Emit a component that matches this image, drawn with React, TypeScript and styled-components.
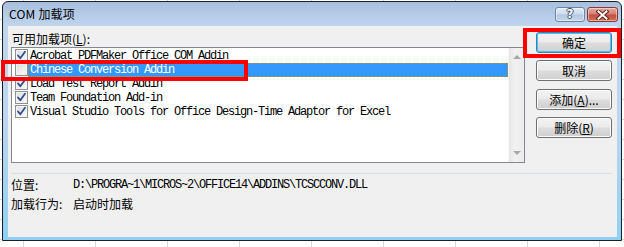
import React from "react";
import styled, { createGlobalStyle } from "styled-components";

const GlobalStyle = createGlobalStyle`
  html, body { margin: 0; padding: 0; }
  body {
    width: 624px;
    height: 247px;
    overflow: hidden;
    background-color: #ffffff;
    background-image:
      repeating-linear-gradient(to right, transparent 0 23px, #d9d9d9 23px 24px, transparent 24px 72px),
      repeating-linear-gradient(to bottom, transparent 0 19px, #d9d9d9 19px 20px);
    font-family: "Noto Sans CJK SC", "Noto Sans", sans-serif;
  }
`;

const Page = styled.div`
  position: relative;
  width: 624px;
  height: 247px;
  padding: 1px 0 0 2px;
  box-sizing: border-box;
`;

const Window = styled.div`
  width: 620px;
  height: 240px;
  box-sizing: border-box;
  border: 1px solid #1c1f24;
  border-radius: 6px 6px 0 0;
  background: linear-gradient(to bottom, #a7bfdd 0px, #b6cce8 14px, #c0d5ee 24px, #bcd6ef 120px, #8fd0f3 238px);
  display: flex;
  flex-direction: column;
  overflow: hidden;
`;

const TitleBar = styled.div`
  height: 24px;
  flex: none;
  display: flex;
  align-items: flex-start;
  padding: 0 3px 0 6px;
`;

const Title = styled.div`
  flex: 1;
  font-size: 12px;
  line-height: 24px;
  color: #000;
  letter-spacing: 0.2px;
`;

const CaptionButton = styled.div<{ $variant: "help" | "close" }>`
  width: ${(p) => (p.$variant === "help" ? "30px" : "31px")};
  height: 15px;
  margin-top: 5px;
  margin-left: ${(p) => (p.$variant === "help" ? "0" : "2px")};
  box-sizing: border-box;
  border-radius: 3px;
  border: 1px solid ${(p) => (p.$variant === "help" ? "#6f84a3" : "#8a3a33")};
  background: ${(p) =>
    p.$variant === "help"
      ? "linear-gradient(to bottom, #e4edf7 0%, #cbdaec 48%, #b3c8e2 52%, #c4d6ec 100%)"
      : "linear-gradient(to bottom, #e8a99f 0%, #d47d70 48%, #c24e3f 52%, #d0705c 100%)"};
  box-shadow: inset 0 0 0 1px rgba(255, 255, 255, 0.45);
  display: flex;
  align-items: center;
  justify-content: center;
`;

const HelpGlyph = styled.span`
  font-family: "DejaVu Sans", sans-serif;
  font-weight: bold;
  font-size: 12px;
  line-height: 13px;
  color: #ffffff;
  text-shadow: 1px 0 0 #3c4f6c, -1px 0 0 #3c4f6c, 0 1px 0 #3c4f6c, 0 -1px 0 #3c4f6c;
`;

const Client = styled.div`
  flex: 1;
  margin: 0 4px 3px 5px;
  background: #f0f0f0;
  display: flex;
  flex-direction: column;
  padding: 0 5px 0 3px;
`;

const TopSection = styled.div`
  display: flex;
  align-items: flex-start;
`;

const LeftCol = styled.div`
  flex: 1;
  display: flex;
  flex-direction: column;
`;

const ListLabel = styled.div`
  height: 21px;
  box-sizing: border-box;
  padding: 3px 0 0 1px;
  display: flex;
  align-items: center;
  font-size: 12px;
  color: #000;
`;

const ListBox = styled.div`
  height: 116px;
  box-sizing: border-box;
  border: 1px solid #828790;
  background: #ffffff;
  display: flex;
`;

const Items = styled.div`
  flex: 1;
  padding-top: 1px;
  display: flex;
  flex-direction: column;
`;

const Row = styled.div`
  height: 14px;
  display: flex;
  align-items: flex-start;
`;

const CheckBox = styled.div`
  width: 13px;
  height: 13px;
  margin-left: 3px;
  box-sizing: border-box;
  border: 1px solid #8e8f8f;
  background: linear-gradient(135deg, #dcdcdc 0%, #f0f0f0 60%, #fdfdfd 100%);
  box-shadow: inset 0 0 0 1px #f4f4f4;
  flex: none;
  position: relative;
`;

const CheckSvg = styled.svg`
  position: absolute;
  left: 0;
  top: 0;
`;

const ItemText = styled.div<{ $selected?: boolean }>`
  flex: 1;
  height: 14px;
  box-sizing: border-box;
  padding-left: 2px;
  font-family: "Liberation Mono", monospace;
  font-size: 12px;
  letter-spacing: -1.2px;
  line-height: 14px;
  white-space: nowrap;
  color: ${(p) => (p.$selected ? "#ffffff" : "#000000")};
  background: ${(p) => (p.$selected ? "#3399ff" : "transparent")};
  outline: ${(p) => (p.$selected ? "1px dotted #d98a2c" : "none")};
  outline-offset: -1px;
`;

const ScrollBar = styled.div`
  width: 16px;
  flex: none;
  background: linear-gradient(to right, #e6e6e6, #f1f1f1 40%, #ececec);
  border-left: 1px solid #f4f4f4;
  box-sizing: border-box;
  display: flex;
  flex-direction: column;
  justify-content: space-between;
  align-items: center;
  padding: 7px 0 7px 0;
`;

const Arrow = styled.div<{ $down?: boolean }>`
  width: 0;
  height: 0;
  border-left: 4px solid transparent;
  border-right: 4px solid transparent;
  ${(p) => (p.$down ? "border-top: 4px solid #a8a8a8;" : "border-bottom: 4px solid #a8a8a8;")}
`;

const ButtonCol = styled.div`
  width: 76px;
  margin-left: 11px;
  padding-top: 6px;
  display: flex;
  flex-direction: column;
`;

const Button = styled.div<{ $default?: boolean; $gap: number }>`
  height: 21px;
  margin-top: ${(p) => p.$gap}px;
  box-sizing: border-box;
  border: 1px solid ${(p) => (p.$default ? "#3c7fb1" : "#707070")};
  border-radius: 3px;
  background: linear-gradient(to bottom, #f2f2f2 0%, #ebebeb 48%, #dddddd 52%, #cfcfcf 100%);
  box-shadow: ${(p) => (p.$default ? "inset 0 0 0 1px #48c2f5" : "inset 0 0 0 1px #fcfcfc")};
  display: flex;
  align-items: center;
  justify-content: center;
  font-size: 12px;
  color: #000;
`;

const Separator = styled.div`
  height: 1px;
  margin-top: 10px;
  background: #d5dfe5;
`;

const InfoGrid = styled.div`
  display: grid;
  grid-template-columns: 62px auto;
  grid-auto-rows: 19px;
  row-gap: 0;
  margin-top: 1px;
  align-items: center;
  font-size: 12px;
  color: #000;
`;

const Mono = styled.span`
  font-family: "Liberation Mono", monospace;
  font-size: 12px;
  letter-spacing: -1.2px;
`;

const Annotation = styled.div<{ $l: number; $t: number; $w: number; $h: number }>`
  position: absolute;
  left: ${(p) => p.$l}px;
  top: ${(p) => p.$t}px;
  width: ${(p) => p.$w}px;
  height: ${(p) => p.$h}px;
  box-sizing: border-box;
  border: 4px solid #ff0000;
  pointer-events: none;
`;

const Check = () => (
  <CheckSvg width="11" height="11" viewBox="0 0 11 11">
    <path d="M2 5.5 L4.3 8.2 L9 1.8" fill="none" stroke="#2e4e8c" strokeWidth="1.8" strokeLinecap="round" strokeLinejoin="round" />
  </CheckSvg>
);

const items = [
  { name: "Acrobat PDFMaker Office COM Addin", checked: true },
  { name: "Chinese Conversion Addin", checked: false, selected: true },
  { name: "Load Test Report Addin", checked: true },
  { name: "Team Foundation Add-in", checked: true },
  { name: "Visual Studio Tools for Office Design-Time Adaptor for Excel", checked: true },
];

export default function App() {
  return (
    <>
      <GlobalStyle />
      <Page>
        <Window>
          <TitleBar>
            <Title>COM 加载项</Title>
            <CaptionButton $variant="help">
              <HelpGlyph>?</HelpGlyph>
            </CaptionButton>
            <CaptionButton $variant="close">
              <svg width="13" height="10" viewBox="0 0 13 10">
                <path d="M2.5 1.5 L10.5 8.5 M10.5 1.5 L2.5 8.5" stroke="#5b2620" strokeWidth="4" strokeLinecap="square" />
                <path d="M2.5 1.5 L10.5 8.5 M10.5 1.5 L2.5 8.5" stroke="#ffffff" strokeWidth="2" strokeLinecap="square" />
              </svg>
            </CaptionButton>
          </TitleBar>
          <Client>
            <TopSection>
              <LeftCol>
                <ListLabel>
                  可用加载项(<u>L</u>):
                </ListLabel>
                <ListBox>
                  <Items>
                    {items.map((it) => (
                      <Row key={it.name}>
                        <CheckBox>{it.checked && <Check />}</CheckBox>
                        <ItemText $selected={it.selected}>{it.name}</ItemText>
                      </Row>
                    ))}
                  </Items>
                  <ScrollBar>
                    <Arrow />
                    <Arrow $down />
                  </ScrollBar>
                </ListBox>
              </LeftCol>
              <ButtonCol>
                <Button $default $gap={0}>确定</Button>
                <Button $gap={7}>取消</Button>
                <Button $gap={8}>添加(<u>A</u>)...</Button>
                <Button $gap={7}>删除(<u>R</u>)</Button>
              </ButtonCol>
            </TopSection>
            <Separator />
            <InfoGrid>
              <span>位置:</span>
              <Mono>D:\PROGRA~1\MICROS~2\OFFICE14\ADDINS\TCSCCONV.DLL</Mono>
              <span>加载行为:</span>
              <span>启动时加载</span>
            </InfoGrid>
          </Client>
        </Window>
        <Annotation $l={523} $t={28} $w={98} $h={30} />
        <Annotation $l={1} $t={60} $w={247} $h={21} />
      </Page>
    </>
  );
}
